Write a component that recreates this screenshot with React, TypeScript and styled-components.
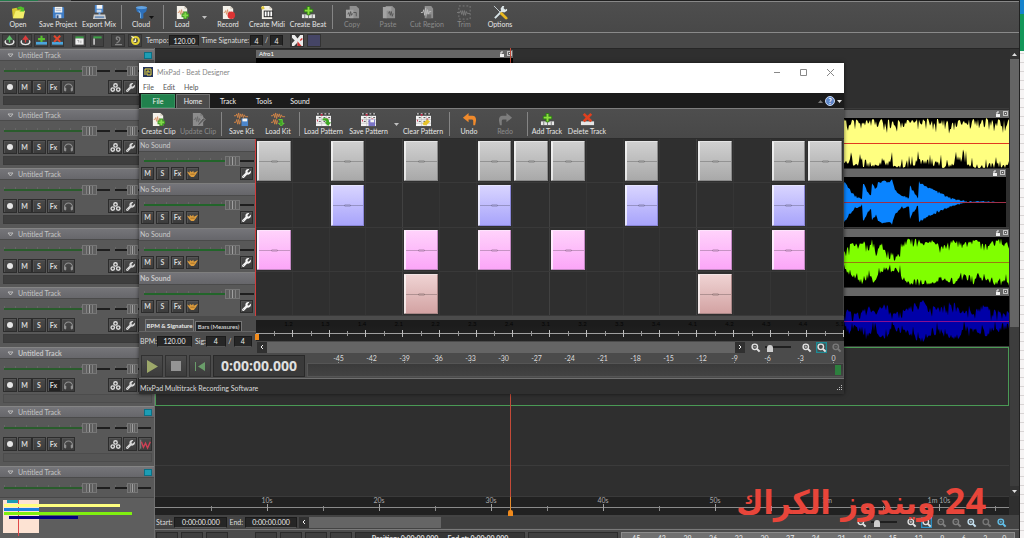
import React from 'react';
import styled, { createGlobalStyle, css } from 'styled-components';
import { FaWrench, FaHeadphones } from 'react-icons/fa6';

const ui = `Lato, "Noto Sans", sans-serif`;

const Global = createGlobalStyle`
  *, *::before, *::after { box-sizing: border-box; }
  body { margin: 0; background: #2f2f2f; font-family: ${ui}; font-size: 7px; line-height: 9px; color: #dcdcdc; }
  button, input { font: inherit; color: inherit; margin: 0; padding: 0; border: 0; background: none; }
  svg { display: block; flex: none; }
`;

/* ---------- icons ---------- */

const Svg = ({ size = 15, children }: { size?: number; children: React.ReactNode }) => (
  <svg width={size} height={size} viewBox="0 0 16 16" fill="none" aria-hidden="true">{children}</svg>
);

const FolderIcon = () => (
  <Svg>
    <path d="M2 14L1 4l5-1 1 2 6-1 1 2-1 8z" fill="#d8c832" />
    <path d="M2 14l3-8h10l-2 8z" fill="#f4ee6a" />
    <path d="M6 4c2-3 5-3 7-1l1-1v5H9l2-2c-1-1-3-1-5-1z" fill="#4fbf2a" />
  </Svg>
);
const FloppyIcon = () => (
  <Svg>
    <path d="M2 2h11l1 1v11H2z" fill="#3f7cc4" />
    <path d="M4 2h8v6H4z" fill="#f4f4f4" />
    <path d="M5 4h6M5 6h6" stroke="#a8b4c4" />
    <path d="M5 10h6v4H5z" fill="#d5dfec" />
    <path d="M6 11h2v3H6z" fill="#2b4f85" />
  </Svg>
);
const ExportIcon = () => (
  <Svg>
    <path d="M3 0h9v8H3z" fill="#4b86cc" />
    <path d="M5 0h6v4H5z" fill="#f5f5f5" />
    <path d="M5 5h5v3H5z" fill="#cad8e8" />
    <path d="M8 8v4" stroke="#5d9be0" strokeWidth="2" />
    <path d="M2 10h12l1 5H1z" fill="#cfcfcf" />
    <path d="M3 12h10v2H3z" fill="#6d8fb8" />
  </Svg>
);
const CloudIcon = () => (
  <Svg>
    <ellipse cx="8" cy="3" rx="6" ry="2" fill="#62a2e0" />
    <path d="M2 3c1 2 11 2 12 0l-1 4-3 2v5l-3 1V9L3 7z" fill="#2d6fb9" />
    <path d="M5 6l2 3v5" stroke="#7bb6ec" />
  </Svg>
);
type Badge = 'plus' | 'record' | 'keys' | 'pencil' | 'none';
const ClipIcon = ({ badge, dim }: { badge: Badge; dim?: boolean }) => (
  <Svg>
    <path d="M2 1h8l3 3v11H2z" fill={dim ? '#8c8c8c' : '#f4f1ea'} />
    <path d="M10 1v3h3" fill={dim ? '#777' : '#cfc8ba'} />
    {badge !== 'keys' && (
      <path d="M3 8h1l1-2 1 4 1-5 1 6 1-4 1 2h2" stroke={dim ? '#6a6a6a' : '#d9936a'} />
    )}
    {badge === 'plus' && (
      <>
        <path d="M11 7v8M7 11h8" stroke="#3b9420" strokeWidth="4" />
        <path d="M11 8v6M8 11h6" stroke="#84d84c" strokeWidth="2" />
      </>
    )}
    {badge === 'record' && <circle cx="11" cy="11" r="4" fill="#dd3434" />}
    {badge === 'keys' && (
      <>
        <path d="M4 6h10v7H4z" fill="#222" />
        <path d="M5 7h2v5H5zM8 7h2v5H8zM11 7h2v5h-2z" fill="#fff" />
        <path d="M1 2l3-1 1 3-3 1z" fill="#e0c83c" />
      </>
    )}
    {badge === 'pencil' && <path d="M7 13l6-7 2 2-6 6-2 0z" fill="#5c5c5c" stroke="#999" />}
  </Svg>
);
const AddBarIcon = () => (
  <Svg>
    <path d="M1 10h14v4H1z" fill="#e6e6e6" />
    <path d="M4 10v4M8 10v4M12 10v4" stroke="#777" />
    <path d="M8 1v10M3 6h10" stroke="#2f7d18" strokeWidth="4" />
    <path d="M8 2v8M4 6h8" stroke="#8ade3c" strokeWidth="2" />
  </Svg>
);
const DeleteBarIcon = () => (
  <Svg>
    <path d="M1 10h14v4H1z" fill="#e6e6e6" />
    <path d="M4 2l8 8M12 2l-8 8" stroke="#e0401f" strokeWidth="3" />
  </Svg>
);
const CopyIcon = ({ page }: { page?: boolean }) => (
  <Svg>
    <path d="M5 1h7l3 3v10H5z" fill="#8f8f8f" />
    <path d={page ? 'M2 2h9v4H6v8H2z' : 'M1 5h8v9H1z'} fill="#a3a3a3" />
    <path d={page ? 'M8 9l1-2 1 4 1-4 1 5 1-3' : 'M3 10l1-2 1 4 1-5 1 4 1-2M9 8h3v4'} stroke="#555" />
  </Svg>
);
const CutIcon = () => (
  <Svg>
    <path d="M5 1h7l2 3v10H5z" fill="#8f8f8f" />
    <path d="M1 8h2l1-3 1 6 1-8 1 9 1-7 1 5 1-3h2" stroke="#bdbdbd" />
    <path d="M7 10h5v4H7z" fill="#6c6c6c" />
  </Svg>
);
const TrimIcon = () => (
  <Svg>
    <path d="M2 1h12v14H2z" stroke="#7d7d7d" strokeDasharray="2 2" />
    <path d="M0 8h3l1-2 1 4 1-4 1 5 1-5 1 5 1-4 1 2h3" stroke="#7c7c7c" />
  </Svg>
);
const OptionsIcon = () => (
  <Svg>
    <path d="M2 14L12 4" stroke="#d8e4e8" strokeWidth="2" />
    <path d="M10 1l2 0-1 3 2 1 2-1v2l-3 2-3-1-1-3z" fill="#dfe8ea" />
    <path d="M1 1l8 8" stroke="#c9d2d6" />
    <path d="M9 9l5 5" stroke="#e8b820" strokeWidth="3" strokeLinecap="round" />
  </Svg>
);
const KitIcon = ({ load }: { load?: boolean }) => (
  <Svg>
    <path d="M0 4h2l1-2 1 4 1-5 1 6 1-5 1 3 1-3 1 4 1-3 1 2h3M0 11h2l1-3 1 5 1-5 1 5 1-4" stroke="#d08448" />
    {load ? (
      <path d="M8 8h4v4h2l-3 3-3-3h2" fill="#3fa324" stroke="#62cf3b" />
    ) : (
      <>
        <path d="M8 7h7v8H8z" fill="#4b86cc" />
        <path d="M9 7h5v3H9z" fill="#f4f4f4" />
      </>
    )}
  </Svg>
);
const PatternIcon = ({ badge }: { badge: 'load' | 'save' | 'clear' }) => (
  <Svg>
    <path d="M0 1h16v14H0z" fill="#f3f3f3" />
    <path d="M0 1h16v3H0z" fill="#3b3b3b" />
    <path d="M1 2h2M5 2h2M9 2h2M13 2h2" stroke="#fff" />
    <path d="M3 6h2M8 6h2M13 6h2M3 10h2M8 10h2" stroke="#444" />
    <path d="M5 3h2M1 9h1M11 8h2" stroke="#d02a4a" strokeWidth="2" />
    <path d="M0 8h16M0 12h16M6 4v11M11 4v11" stroke="#a9a9a9" strokeWidth=".5" />
    {badge === 'load' && <path d="M7 7c6-1 7 1 7 4h2l-3 4-4-4h2c0-2-1-2-4-2z" fill="#3da822" />}
    {badge === 'save' && (
      <>
        <path d="M8 8h7v7H8z" fill="#7a74c8" />
        <path d="M10 8h4v3h-4z" fill="#f2f2f2" />
      </>
    )}
    {badge === 'clear' && <path d="M7 12l5-4 3 2-4 4H8z" fill="#e6c32a" />}
  </Svg>
);
const ArrowBackIcon = ({ flip, color }: { flip?: boolean; color: string }) => (
  <Svg>
    <path
      transform={flip ? 'translate(16 0) scale(-1 1)' : undefined}
      d="M1 6l6-5v3h4c3 0 4 2 4 5l-1 5h-2l0-4c0-2-1-2-2-2H7v3z"
      fill={color}
    />
  </Svg>
);
const LoopIcon = ({ color }: { color: string }) => (
  <Svg size={11}>
    <path d="M3 8c-2 1-2 6 5 6s7-5 5-6" stroke="#e4e4e4" strokeWidth="2" />
    <path d="M8 11V5M5 6l3-4 3 4z" stroke={color} strokeWidth="2" fill={color} />
  </Svg>
);
const SmallTrackIcon = ({ remove }: { remove?: boolean }) => (
  <Svg size={11}>
    <path d="M0 10h16v4H0z" fill="#4aa5dc" />
    {remove ? (
      <path d="M3 1l9 9M12 1l-9 9" stroke="#e2452d" strokeWidth="3" />
    ) : (
      <path d="M8 1v9M3 6h10" stroke="#59c02f" strokeWidth="3" />
    )}
  </Svg>
);
const PanelIcon = ({ filled }: { filled?: boolean }) => (
  <Svg size={11}>
    <path d="M2 2h12v3H2z" fill="#3da047" />
    {filled ? <path d="M2 5h12v9H2z" fill="#f1f1f1" /> : <path d="M2 5h2v9H2z" fill="#e4e4e4" />}
    {filled && <path d="M5 8h2v3M10 8v4" stroke="#888" />}
  </Svg>
);
const MetronomeIcon = () => (
  <Svg size={11}><path d="M3 14h10M5 12c6-3 6-8 3-9s-5 2-1 4" stroke="#858585" strokeWidth="2" /></Svg>
);
const SnapIcon = () => (
  <Svg size={11}>
    <circle cx="8" cy="8" r="5" stroke="#e6d332" strokeWidth="3" />
    <path d="M8 5v4H5M2 2l4 2" stroke="#f7f3c8" strokeWidth="2" />
  </Svg>
);
const FadeIcon = () => (
  <Svg size={11}>
    <path d="M0 0h16v16H0z" fill="#ececec" />
    <path d="M4 0l4 5 4-5zM3 16l5-5v5zM0 4l4 4-4 4z" fill="#3a3a3a" />
    <path d="M8 9l6 7H8z" fill="#d43333" />
    <path d="M15 5l-3 3" stroke="#d43333" strokeWidth="2" />
  </Svg>
);
const CirclesIcon = () => (
  <Svg size={11}>
    <circle cx="8" cy="5" r="2.500" stroke="#dedede" strokeWidth="2" />
    <circle cx="4" cy="11" r="2.500" stroke="#dedede" strokeWidth="2" />
    <circle cx="12" cy="11" r="2.500" stroke="#dedede" strokeWidth="2" />
  </Svg>
);
const CurveIcon = () => (
  <Svg size={11}>
    <path d="M1 1v13" stroke="#a9a9a9" />
    <path d="M2 4l3 8 3-6 3 7 4-9" stroke="#cf4055" strokeWidth="2" />
  </Svg>
);
const HandIcon = () => (
  <Svg size={11}>
    <path d="M0 5l4 2 0-3 3 2 2-2 1 3 6-3-3 5-3 4H6L3 10z" fill="#dd9d3e" />
    <path d="M5 9h6" stroke="#8e5d1c" />
  </Svg>
);
const LensIcon = ({ sign, color = '#e2e2e2', box }: { sign?: '+' | '-'; color?: string; box?: string }) => (
  <Svg size={11}>
    {box && <path d="M1 1h14v14H1z" stroke={box} strokeWidth="2" />}
    <circle cx="7" cy="7" r="4" stroke={color} strokeWidth="2" />
    <path d="M10 10l4 4" stroke={color} strokeWidth="3" />
    {sign && <path d={sign === '-' ? 'M5 7h4' : 'M5 7h4M7 5v4'} stroke={color} />}
  </Svg>
);
const LockPair = () => (
  <svg width="14" height="6" viewBox="0 0 14 6" fill="none" aria-hidden="true">
    <path d="M1 3h4v3H1z" fill="#f0f0f0" />
    <path d="M2 3V1h2" stroke="#f0f0f0" />
    <path d="M8 0h5v5H8z" fill="#c4c4c4" />
    <path d="M9 1h3v3H9z" fill="#666" />
    <path d="M10 2h1v1h-1z" fill="#eee" />
  </svg>
);
const Caret = ({ up, color = '#e0e0e0' }: { up?: boolean; color?: string }) => (
  <svg width="5" height="3" viewBox="0 0 5 3" aria-hidden="true">
    <path d={up ? 'M0 3L2.500 0 5 3z' : 'M0 0h5L2.500 3z'} fill={color} />
  </svg>
);
const Chevron = ({ right }: { right?: boolean }) => (
  <svg width="4" height="6" viewBox="0 0 4 6" fill="none" aria-hidden="true">
    <path d={right ? 'M1 1l2 2-2 2' : 'M3 1L1 3l2 2'} stroke="#f4f4f4" />
  </svg>
);

/* ---------- shared parts ---------- */

const ToolRow = styled.div<{ $h: number }>`
  display: flex;
  height: ${p => p.$h}px;
  padding-top: 3px;
  background: linear-gradient(#4e4e4e, #484848);
  overflow: hidden;
`;
const Tool = styled.button<{ $w: number }>`
  position: relative;
  flex: none;
  width: ${p => p.$w}px;
  display: flex;
  flex-direction: column;
  align-items: center;
  white-space: nowrap;
  color: #e6e6e6;
  &:disabled { color: #8b8b8b; }
`;
const ToolLabel = styled.span`
  display: flex;
  justify-content: center;
  width: 0;
`;
const Divider = styled.span<{ $w: number }>`
  flex: none;
  width: ${p => p.$w}px;
  height: 24px;
  background: linear-gradient(#858585, #858585) center / 1px 100% no-repeat;
`;
const DropArrow = styled.button<{ $w: number }>`
  flex: none;
  width: ${p => p.$w}px;
  height: 24px;
  display: grid;
  place-items: center;
`;
const CornerCaret = styled.span`
  position: absolute;
  right: 4px;
  top: 11px;
`;

type ToolDef = { w: number; label?: string; icon?: React.ReactNode; off?: boolean; kind?: 'div' | 'drop'; caret?: boolean };
const Tools = ({ items, h }: { items: ToolDef[]; h: number }) => (
  <ToolRow $h={h}>
    {items.map((t, i) =>
      t.kind === 'div' ? (
        <Divider key={i} $w={t.w} />
      ) : t.kind === 'drop' ? (
        <DropArrow key={i} $w={t.w} aria-label="More"><Caret color="#c0c0c0" /></DropArrow>
      ) : (
        <Tool key={i} $w={t.w} disabled={t.off}>
          {t.icon}
          <ToolLabel>{t.label}</ToolLabel>
          {t.caret && <CornerCaret><Caret color="#111" /></CornerCaret>}
        </Tool>
      )
    )}
  </ToolRow>
);

const Field = styled.input<{ $w: number }>`
  width: ${p => p.$w}px;
  height: 11px;
  flex: none;
  text-align: center;
  background: #262626;
  border: 1px solid #1b1b1b;
  border-bottom-color: #555;
  color: #ececec;
`;

const Range = styled.input<{ $at: number; $thumb: number; $fill: string }>`
  appearance: none;
  flex: 1;
  min-width: 0;
  height: 10px;
  outline: none;
  background:
    linear-gradient(90deg, ${p => p.$fill} ${p => p.$at}%, #1f1f1f ${p => p.$at}%) center / 100% 2px no-repeat,
    repeating-linear-gradient(90deg, #666 0 1px, transparent 1px 11px) 0 2px / 74% 2px no-repeat;
  &::-webkit-slider-thumb {
    appearance: none;
    width: ${p => p.$thumb}px;
    height: 10px;
    border: 1px solid #767676;
    background: linear-gradient(90deg, transparent 25%, #828282 25% 33%, transparent 33% 45%, #a0a0a0 45% 55%, transparent 55% 67%, #828282 67% 75%, transparent 75%), #5f5f5f;
  }
`;
const ZoomRange = styled.input`
  appearance: none;
  width: 26px;
  height: 11px;
  flex: none;
  background: linear-gradient(#1f1f1f, #1f1f1f) center 4px / 100% 2px no-repeat;
  &::-webkit-slider-thumb {
    appearance: none;
    width: 6px;
    height: 7px;
    margin-top: 3px;
    background: #cfcfcf;
    border-radius: 3px 3px 0 0;
  }
`;
const SquareButton = styled.button<{ $size: number; $dark?: boolean }>`
  flex: none;
  width: ${p => p.$size}px;
  height: ${p => p.$size}px;
  display: grid;
  place-items: center;
  font-weight: 700;
  color: #d8d8d8;
  background: ${p => (p.$dark ? '#222' : 'linear-gradient(#4a4a4a, #3c3c3c)')};
  border: 1px solid #2c2c2c;
  box-shadow: inset 1px 1px 0 #535353;
`;
const Dot = styled.span`
  width: 6px;
  height: 6px;
  border-radius: 50%;
  background: #e6e6e6;
`;

/* ---------- main window ---------- */

const Page = styled.div`
  position: relative;
  display: flex;
  height: 100vh;
  overflow: hidden;
`;
const Desktop = styled.div`
  flex: none;
  width: 5px;
  border-left: 1px solid #222;
  background:
    linear-gradient(#1583cc 0 14px, #12985a 14px 51px, transparent 51px),
    repeating-linear-gradient(#f6f4f4 0 8px, #d9d5d5 8px 9px);
`;
const Main = styled.main`
  flex: 1;
  min-width: 0;
  display: flex;
  flex-direction: column;
  background: #4b4b4b;
`;
const TopEdge = styled.div`
  flex: none;
  height: 2px;
  border-bottom: 1px solid #888;
  background: linear-gradient(90deg, #237a4a 38px, #5a5a5a 38px 71px, #202020 71px);
`;
const QuickBar = styled.div`
  flex: none;
  display: flex;
  align-items: center;
  height: 16px;
  padding-left: 2px;
  border-top: 1px solid #8a8a8a;
  background: #484848;
  white-space: nowrap;
`;
const QuickButton = styled.button<{ $gap?: number; $fill?: string }>`
  flex: none;
  display: grid;
  place-items: center;
  width: 14px;
  height: 13px;
  margin-right: ${p => p.$gap ?? 2}px;
  background: ${p => p.$fill ?? '#424242'};
  border: 1px solid #333;
`;
const QuickLabel = styled.label`
  display: flex;
  align-items: center;
  gap: 1px;
  margin-left: 2px;
`;
const Slash = styled.span<{ $w: number }>`
  flex: none;
  width: ${p => p.$w}px;
  text-align: center;
`;
const Workspace = styled.div`
  position: relative;
  flex: 1;
  min-height: 0;
  display: flex;
  background: #2f2f2f;
`;
const Side = styled.aside`
  flex: none;
  width: 155px;
  display: flex;
  flex-direction: column;
  background: #5a5a5a;
  border-right: 1px solid #707070;
`;
const TrackList = styled.div`
  flex: 1;
  min-height: 0;
  overflow: hidden;
  padding-top: 1px;
`;
const Track = styled.section`
  height: 59px;
  background: #585858;
  &:nth-child(odd) { height: 60px; }
`;
const TrackHead = styled.header<{ $bold?: boolean }>`
  display: flex;
  align-items: center;
  height: 12px;
  padding: 0 2px 0 7px;
  gap: 4px;
  font-weight: ${p => (p.$bold ? 700 : 400)};
  color: #c4c4c4;
  background: linear-gradient(#757579, #67676b);
  border-top: 1px solid #858585;
  border-bottom: 1px solid #4a4a4a;
`;
const TrackName = styled.span`
  flex: 1;
`;
const TrackColor = styled.span`
  width: 8px;
  height: 7px;
  background: #1d9db4;
  border: 1px solid #0e6f84;
`;
const Sliders = styled.div`
  display: flex;
  align-items: center;
  gap: 5px;
  height: 19px;
  padding: 1px 3px 0 4px;
`;
const PanSlot = styled.span`
  display: flex;
  width: 36px;
`;
const Controls = styled.div`
  display: flex;
  justify-content: space-between;
  padding: 0 2px 0 3px;
`;
const LeftKeys = styled.div`
  display: flex;
  justify-content: space-between;
  width: 72px;
`;
const RightKeys = styled.div`
  display: flex;
  gap: 1px;
`;
const LevelBar = styled.div<{ $open?: boolean }>`
  height: 9px;
  margin: 2px 2px 0 3px;
  border: 1px solid ${p => (p.$open ? '#4c4c4c' : '#3a3a3a')};
  background: ${p => (p.$open ? '#555' : '#3e3e3e')};
`;
const Overview = styled.div`
  flex: none;
  display: grid;
  grid-template-rows: 4px 4px 4px 4px 4px 1fr;
  height: 41px;
  padding: 2px 4px 5px;
  border-top: 1px solid #474747;
  background:
    linear-gradient(#e04848, #e04848) 18px 2px / 1px 36px no-repeat,
    linear-gradient(#fde3d3, #fde3d3) 3px 2px / 36px 33px no-repeat,
    #5e5e5e;
`;
const OverviewBar = styled.span<{ $from: number; $w: number; $c: string }>`
  width: ${p => p.$w}px;
  height: 3px;
  margin-left: ${p => p.$from}px;
  background: ${p => p.$c};
`;

const TrackStrip = ({ index, folded }: { index: number; folded?: boolean }) => (
  <Track>
    <TrackHead $bold={index === 5}>
      <svg width="7" height="5" viewBox="0 0 7 5" fill="none" aria-hidden="true"><path d="M1 1h5L3.500 4z" stroke="#bdbdbd" /></svg>
      <TrackName>Untitled Track</TrackName>
      <TrackColor />
    </TrackHead>
    <Sliders>
      <Range type="range" aria-label="Volume" defaultValue={86} $at={80} $thumb={15} $fill="#2a5c2c" />
      <PanSlot><Range type="range" aria-label="Pan" defaultValue={48} $at={50} $thumb={11} $fill="#1c1c1c" /></PanSlot>
    </Sliders>
    {!folded && (
      <>
        <Controls>
          <LeftKeys>
            <SquareButton $size={14} aria-label="Record"><Dot /></SquareButton>
            <SquareButton $size={14}>M</SquareButton>
            <SquareButton $size={14}>S</SquareButton>
            <SquareButton $size={14} $dark={index === 5}>Fx</SquareButton>
            <SquareButton $size={14} aria-label="Monitor"><FaHeadphones size={9} color="#909090" /></SquareButton>
          </LeftKeys>
          <RightKeys>
            <SquareButton $size={14} aria-label="Group"><CirclesIcon /></SquareButton>
            <SquareButton $size={14} aria-label="Settings"><FaWrench size={9} /></SquareButton>
            <SquareButton $size={14} aria-label="Automation"><CurveIcon /></SquareButton>
          </RightKeys>
        </Controls>
        <LevelBar $open={index > 4} />
      </>
    )}
  </Track>
);

const Center = styled.div`
  flex: 1;
  min-width: 0;
  display: flex;
  flex-direction: column;
`;
const LaneArea = styled.div`
  flex: 1;
  min-height: 0;
  display: flex;
  border-top: 1px solid #262626;
`;
const Lanes = styled.div`
  flex: 1;
  min-width: 0;
  overflow: hidden;
  padding-right: 1px;
`;
const Lane = styled.div<{ $selected?: boolean }>`
  display: flex;
  flex-direction: column;
  height: 59px;
  padding-top: 1px;
  border-bottom: 1px solid #3b3b3b;
  &:nth-child(odd) { height: 60px; }
  ${p => p.$selected && css`border: 1px solid #4a9a55;`}
`;
const Region = styled.div<{ $from?: number; $end?: number; $w?: number }>`
  display: flex;
  flex-direction: column;
  width: ${p => (p.$w ? `${p.$w}px` : 'auto')};
  margin-left: ${p => p.$from ?? 0}px;
  margin-right: ${p => p.$end ?? 0}px;
  background: #000;
`;
const RegionHead = styled.div`
  display: flex;
  justify-content: space-between;
  align-items: center;
  height: 8px;
  padding: 0 0 0 3px;
  font-size: 6px;
  line-height: 8px;
  color: #fff;
  background: #666;
`;
const RegionBody = styled.div`
  display: flex;
  justify-content: flex-end;
  height: 50px;
`;

type Pt = [number, number];
const sample = (pts: Pt[], x: number) => {
  for (let i = 1; i < pts.length; i++) {
    if (x <= pts[i][0]) {
      const [x0, y0] = pts[i - 1];
      const [x1, y1] = pts[i];
      return y0 + ((y1 - y0) * (x - x0)) / (x1 - x0 || 1);
    }
  }
  return pts[pts.length - 1][1];
};
const wavePath = (top: Pt[], bottom: Pt[], jitter: number, seed: number) => {
  let s = seed;
  const rnd = () => {
    s = (s * 16807) % 2147483647;
    return s / 2147483647;
  };
  const up: string[] = [];
  const down: string[] = [];
  for (let x = 0; x <= 165; x++) {
    const a = Math.max(0, Math.min(25, sample(top, x) - rnd() * rnd() * jitter));
    const b = Math.max(0, Math.min(25, sample(bottom, x) - rnd() * rnd() * jitter));
    up.push(`${x} ${(25 - a).toFixed(1)}`);
    down.unshift(`${x} ${(25 + b).toFixed(1)}`);
  }
  return `M${up.join('L')}L${down.join('L')}Z`;
};
const Wave = ({ d, color, line }: { d: string; color: string; line: string }) => (
  <svg width="165" height="50" viewBox="0 0 165 50" aria-hidden="true">
    <path d={d} fill={color} />
    <path d="M0 25.500h165" stroke={line} />
  </svg>
);
const yellowWave = wavePath([[0, 24], [40, 24], [60, 23], [80, 25], [110, 23], [140, 25], [165, 24]], [[0, 22], [25, 25], [38, 22], [60, 26], [80, 21], [100, 26], [118, 20], [130, 26], [165, 26]], 16, 770);
const bluePts: Pt[] = [[0, 16], [3, 21], [8, 14], [14, 7], [21, 4], [22, 20], [27, 11], [30, 7], [31, 19], [35, 14], [37, 20], [42, 22], [48, 20], [51, 23], [54, 13], [60, 7], [68, 5], [69, 17], [72, 12], [77, 4], [78, 21], [85, 16], [92, 13], [99, 10], [105, 7], [112, 4], [120, 2], [130, 1], [144, 1], [165, 0]];
const blueWave = wavePath(bluePts, bluePts, 3, 12);
const greenWave = wavePath(
  [[0, 11], [6, 19], [12, 19], [18, 23], [25, 16], [28, 23], [33, 14], [37, 21], [42, 12], [50, 9], [56, 9], [57, 19], [64, 24], [75, 23], [90, 22], [97, 16], [110, 23], [120, 19], [130, 24], [140, 18], [150, 22], [158, 24], [165, 20]],
  [[0, 8], [6, 14], [12, 18], [18, 23], [25, 16], [30, 22], [34, 13], [42, 10], [56, 12], [58, 18], [66, 23], [75, 24], [90, 22], [100, 18], [110, 23], [120, 18], [130, 23], [140, 18], [150, 23], [165, 24]],
  12, 431
);
const navyPts: Pt[] = [[0, 5], [4, 16], [8, 8], [18, 12], [22, 19], [30, 10], [37, 18], [42, 18], [48, 8], [55, 13], [62, 12], [72, 19], [78, 22], [85, 16], [95, 14], [105, 19], [115, 18], [120, 9], [125, 16], [130, 11], [140, 17], [150, 12], [165, 10]];
const navyWave = wavePath(navyPts, navyPts, 15, 99);

const VScroll = styled.div`
  flex: none;
  width: 9px;
  display: flex;
  flex-direction: column;
  justify-content: space-between;
  background: #3d3d3d;
`;
const VButton = styled.button`
  display: grid;
  place-items: center;
  height: 10px;
  background: #333;
`;
const VThumb = styled.div`
  flex: 0 0 60%;
  margin-bottom: auto;
  background: #656565;
`;
const Ruler = styled.div`
  flex: none;
  display: flex;
  height: 19px;
  margin-right: 10px;
  padding-left: 56px;
  overflow: hidden;
  border-top: 1px solid #3a3a3a;
  background: linear-gradient(#8a8a8a, #8a8a8a) 0 10px / 100% 1px no-repeat, #212121;
`;
const RulerCell = styled.div`
  flex: none;
  width: 112px;
  height: 15px;
  line-height: 6px;
  text-align: center;
  color: #a8a8a8;
  background:
    linear-gradient(#a0a0a0, #a0a0a0) center 7px / 1px 7px no-repeat,
    linear-gradient(#8a8a8a, #8a8a8a) 0 9px / 1px 5px no-repeat;
`;
const Playhead = styled.div`
  position: absolute;
  left: 510px;
  top: 0;
  bottom: 22px;
  width: 1px;
  background: #c44a38;
`;
const PlayMark = styled.span`
  position: absolute;
  left: -2px;
  bottom: 0;
  width: 5px;
  height: 6px;
  background: #f08a1c;
  border-radius: 2px 2px 0 0;
`;
const PlayStem = styled.span`
  position: absolute;
  left: 0;
  bottom: 6px;
  width: 1px;
  height: 13px;
  background: #e58a2a;
`;
const RangeRow = styled.div`
  flex: none;
  display: flex;
  align-items: center;
  height: 15px;
  padding: 0 12px 0 1px;
  gap: 2px;
  white-space: nowrap;
  border-bottom: 1px solid #7a7a7a;
  background: #434343;
`;
const RowLabel = styled.label`
  display: flex;
  align-items: center;
  gap: 2px;
`;
const HScroll = styled.div`
  flex: 1;
  display: flex;
  height: 11px;
  background: #404040;
`;
const HButton = styled.button`
  width: 10px;
  display: grid;
  place-items: center;
  background: #303030;
`;
const HThumb = styled.div<{ $grow: number; $basis: number }>`
  flex: ${p => p.$grow} 0 ${p => p.$basis}px;
  background: #656565;
`;
const ZoomTools = styled.div`
  display: flex;
  gap: 4px;
  align-items: center;
  margin-left: 5px;
`;
const BareButton = styled.button`
  display: grid;
  place-items: center;
  width: 11px;
  height: 11px;
`;
const CutTransport = styled.div`
  flex: none;
  display: flex;
  gap: 3px;
  height: 8px;
  padding: 2px 4px 0 1px;
  background: #4b4b4b;
  overflow: hidden;
`;
const CutKey = styled.button<{ $w: number; $blank?: boolean }>`
  flex: none;
  width: ${p => p.$w}px;
  height: 22px;
  background: ${p => (p.$blank ? 'transparent' : '#3f3f3f')};
  border: ${p => (p.$blank ? '0' : '1px solid #2b2b2b')};
`;
const CutText = styled.div<{ $w: number }>`
  flex: none;
  width: ${p => p.$w}px;
  height: 20px;
  padding-top: 1px;
  text-align: center;
  font-weight: 700;
  color: #ddd;
  background: #363636;
  border: 1px solid #2b2b2b;
`;
const CutMeter = styled.div`
  flex: 1;
  display: flex;
  justify-content: space-around;
  height: 20px;
  padding-top: 1px;
  color: #eee;
  background: #707070;
  border: 1px solid #8c8c8c;
`;

/* ---------- beat designer ---------- */

const Designer = styled.section`
  position: absolute;
  left: 139px;
  right: 180px;
  top: 63px;
  background: #4b4b4b;
  box-shadow: 0 0 4px rgba(0, 0, 0, 0.6);
`;
const TitleBar = styled.header`
  display: flex;
  align-items: center;
  gap: 4px;
  height: 18px;
  padding-left: 4px;
  color: #858585;
  background: #fff;
`;
const WinKeys = styled.div`
  display: flex;
  margin-left: auto;
`;
const WinKey = styled.button`
  display: grid;
  place-items: center;
  width: 27px;
  height: 18px;
`;
const MenuBar = styled.nav`
  display: flex;
  gap: 9px;
  height: 12px;
  padding-left: 4px;
  color: #555;
  background: #fff;
`;
const MenuItem = styled.button`
  line-height: 11px;
`;
const TabBar = styled.div`
  display: flex;
  align-items: flex-end;
  height: 16px;
  padding-left: 2px;
  background: #1b1b1b;
  border-bottom: 1px solid #7d7d7d;
`;
const Tab = styled.button<{ $kind?: 'file' | 'active' }>`
  flex: none;
  width: ${p => (p.$kind ? 34 : 36)}px;
  height: 14px;
  color: #f0f0f0;
  ${p => p.$kind === 'file' && css`background: #21814d; border: 1px solid #3a8f61; margin-right: 1px;`}
  ${p => p.$kind === 'active' && css`background: #4b4b4b; border: 1px solid #707070; border-bottom: 0;`}
`;
const HelpGroup = styled.div`
  display: flex;
  align-items: center;
  gap: 2px;
  margin: 0 2px 2px auto;
`;
const HelpButton = styled.button`
  width: 10px;
  height: 10px;
  border-radius: 50%;
  background: #5f86c8;
  border: 1px solid #c7d6ef;
  color: #fff;
  font-weight: 700;
  line-height: 8px;
`;
const Board = styled.div`
  display: flex;
  border-top: 1px solid #2c2c2c;
`;
const BoardSide = styled.div`
  flex: none;
  width: 117px;
  background: #585858;
  border-right: 1px solid #d23c3c;
`;
const BeatTrack = styled.section`
  height: 44px;
  &:nth-child(2) { height: 45px; }
`;
const BeatHead = styled.header<{ $bold?: boolean }>`
  height: 13px;
  padding: 1px 1px 0;
  color: #cacaca;
  font-weight: ${p => (p.$bold ? 700 : 400)};
  background: linear-gradient(#75757a, #66666a);
  border-top: 1px solid #7e7e7e;
  border-bottom: 1px solid #4a4a4a;
`;
const BeatSlider = styled.div`
  display: flex;
  align-items: center;
  height: 15px;
  padding: 2px 1px 0 5px;
`;
const BeatKeys = styled.div`
  display: flex;
  gap: 2px;
  padding: 0 2px 0 2px;
  & > :last-child { margin-left: auto; }
`;
const Grid = styled.div`
  flex: 1;
  min-width: 0;
  background: #2f2f2f;
`;
const GridRow = styled.div`
  display: grid;
  grid-template-columns: repeat(16, 1fr);
  height: 44px;
  border-bottom: 1px solid #393939;
  &:nth-child(2) { height: 45px; }
`;
const Cell = styled.div<{ $line: boolean }>`
  padding: 2px 1px 1px 1px;
  border-right: 1px solid ${p => (p.$line ? '#414141' : '#353535')};
  display: flex;
`;
const Pad = styled.button<{ $a: string; $b: string; $edge: string }>`
  flex: 1;
  display: grid;
  place-items: center;
  border: 1px solid ${p => p.$edge};
  border-left: 2px solid #ffffffb0;
  border-top: 1px solid #ffffffb0;
  background: linear-gradient(#00000038, #00000038) center / 100% 1px no-repeat, linear-gradient(${p => p.$a}, ${p => p.$b});
`;
const PadMark = styled.span`
  width: 7px;
  height: 3px;
  border: 1px solid #00000024;
  border-radius: 2px;
`;
const LowerArea = styled.div`
  display: flex;
  padding-top: 4px;
`;
const LowerSide = styled.div`
  flex: none;
  width: 117px;
`;
const MiniTabs = styled.div`
  display: flex;
  gap: 1px;
  height: 12px;
  align-items: flex-end;
  padding-left: 6px;
  border-bottom: 1px solid #666;
`;
const MiniTab = styled.button<{ $on?: boolean }>`
  height: ${p => (p.$on ? 12 : 10)}px;
  width: ${p => (p.$on ? 49 : 47)}px;
  font-size: 6px;
  line-height: 8px;
  font-weight: ${p => (p.$on ? 700 : 400)};
  white-space: nowrap;
  color: #e8e8e8;
  background: ${p => (p.$on ? '#505050' : '#222')};
  border: 1px solid #777;
  border-bottom: 0;
`;
const BpmRow = styled.div`
  display: flex;
  align-items: center;
  height: 14px;
  margin-top: 2px;
  padding-left: 1px;
  & label { gap: 0; }
`;
const LowerMain = styled.div`
  flex: 1;
  min-width: 0;
`;
const BeatRuler = styled.div`
  position: relative;
  display: grid;
  grid-template-columns: repeat(16, 1fr);
  height: 21px;
  background: linear-gradient(#a0a0a0, #a0a0a0) 0 13px / 100% 1px no-repeat, linear-gradient(#1c1c1c 6px, #242424);
`;
const BeatTick = styled.span`
  line-height: 8px;
  font-size: 6px;
  color: #060606;
  text-align: right;
  background:
    linear-gradient(#bdbdbd, #bdbdbd) right 10px / 1px 7px no-repeat,
    linear-gradient(#9a9a9a, #9a9a9a) center 11px / 1px 5px no-repeat;
`;
const BeatMark = styled.span`
  position: absolute;
  left: -1px;
  top: 14px;
  width: 4px;
  height: 6px;
  background: #f08a1c;
`;
const BeatScroll = styled.div`
  display: flex;
  align-items: center;
  height: 12px;
  padding: 0 2px 0 1px;
`;
const Transport = styled.div`
  display: flex;
  gap: 2px;
  height: 26px;
  padding: 2px 0 1px 2px;
  border-bottom: 1px solid #707070;
`;
const TransportKey = styled.button`
  flex: none;
  width: 22px;
  height: 22px;
  display: grid;
  place-items: center;
  background: linear-gradient(#4c4c4c, #3c3c3c);
  border: 1px solid #313131;
`;
const Clock = styled.output`
  flex: none;
  width: 92px;
  height: 22px;
  text-align: center;
  font: 700 14px/20px "Open Sans", "Noto Sans", sans-serif;
  color: #e0e0e0;
  background: #3a3a3a;
  border: 1px solid #292929;
`;
const Meter = styled.div`
  flex: 1;
  min-width: 0;
`;
const MeterScale = styled.div`
  display: flex;
  justify-content: space-between;
  height: 8px;
  padding: 0 10px 0 31px;
  line-height: 6px;
`;
const MeterMark = styled.span`
  display: flex;
  justify-content: center;
  width: 1px;
  background: linear-gradient(#999, #999) center bottom / 1px 1px no-repeat;
`;
const MeterBar = styled.div`
  display: flex;
  justify-content: flex-end;
  height: 14px;
  padding: 1px 2px;
  background: linear-gradient(#3a3a3a, #434343);
  border: 1px solid #555;
`;
const Peak = styled.span`
  width: 6px;
  background: #2d7f3e;
`;
const Status = styled.footer`
  display: flex;
  align-items: center;
  justify-content: space-between;
  height: 15px;
  padding: 3px 1px 0;
  background: #2f2f2f;
`;
const Watermark = styled.div`
  position: absolute;
  right: 38px;
  bottom: 10px;
  font: 700 36px/50px "Open Sans", sans-serif;
  color: #e8453a;
  white-space: nowrap;
`;
const ArabicWords = styled.span`
  font: 700 33px/50px "DejaVu Sans Condensed", "DejaVu Sans", sans-serif;
  font-stretch: condensed;
`;

const mainTools: ToolDef[] = [
  { w: 36, label: 'Open', icon: <FolderIcon /> },
  { w: 44, label: 'Save Project', icon: <FloppyIcon /> },
  { w: 38, label: 'Export Mix', icon: <ExportIcon /> },
  { w: 6, kind: 'div' },
  { w: 34, label: 'Cloud', icon: <CloudIcon />, caret: true },
  { w: 10, kind: 'div' },
  { w: 28, label: 'Load', icon: <ClipIcon badge="plus" /> },
  { w: 16, kind: 'drop' },
  { w: 32, label: 'Record', icon: <ClipIcon badge="record" /> },
  { w: 46, label: 'Create Midi', icon: <ClipIcon badge="keys" /> },
  { w: 36, label: 'Create Beat', icon: <AddBarIcon /> },
  { w: 12, kind: 'div' },
  { w: 28, label: 'Copy', icon: <CopyIcon />, off: true },
  { w: 44, label: 'Paste', icon: <CopyIcon page />, off: true },
  { w: 34, label: 'Cut Region', icon: <CutIcon />, off: true },
  { w: 40, label: 'Trim', icon: <TrimIcon />, off: true },
  { w: 32, label: 'Options', icon: <OptionsIcon /> },
];
const beatTools: ToolDef[] = [
  { w: 39, label: 'Create Clip', icon: <ClipIcon badge="plus" /> },
  { w: 40, label: 'Update Clip', icon: <ClipIcon badge="pencil" dim />, off: true },
  { w: 6, kind: 'div' },
  { w: 35, label: 'Save Kit', icon: <KitIcon /> },
  { w: 38, label: 'Load Kit', icon: <KitIcon load /> },
  { w: 5, kind: 'div' },
  { w: 43, label: 'Load Pattern', icon: <PatternIcon badge="load" /> },
  { w: 47, label: 'Save Pattern', icon: <PatternIcon badge="save" /> },
  { w: 8, kind: 'drop' },
  { w: 46, label: 'Clear Pattern', icon: <PatternIcon badge="clear" /> },
  { w: 7, kind: 'div' },
  { w: 32, label: 'Undo', icon: <ArrowBackIcon color="#f08a2c" /> },
  { w: 40, label: 'Redo', icon: <ArrowBackIcon flip color="#7d7d7d" />, off: true },
  { w: 4, kind: 'div' },
  { w: 36, label: 'Add Track', icon: <AddBarIcon /> },
  { w: 44, label: 'Delete Track', icon: <DeleteBarIcon /> },
];
const padRows = [
  { on: [0, 2, 4, 6, 7, 8, 10, 12, 14, 15], a: '#d0d0d0', b: '#a9a9a9', edge: '#8a8a8a' },
  { on: [2, 6, 10, 14], a: '#d8d4ff', b: '#a8a4fb', edge: '#8a86d8' },
  { on: [0, 4, 6, 8, 12, 14], a: '#ffd2fb', b: '#fba6f8', edge: '#c488c4' },
  { on: [4, 12], a: '#efd3d3', b: '#d3a3a3', edge: '#a98686' },
];
const meterMarks = Array.from({ length: 16 }, (_, i) => i * 3 - 45);

const BeatDesigner = () => (
  <Designer>
    <TitleBar>
      <svg width="10" height="10" viewBox="0 0 10 10" fill="none" aria-hidden="true">
        <path d="M0 0h10v10H0z" fill="#26355c" />
        <path d="M2 8V2h6v6H4M4 8V4h2v2" stroke="#ecd83c" />
      </svg>
      MixPad - Beat Designer
      <WinKeys>
        <WinKey aria-label="Minimize"><svg width="6" height="6" aria-hidden="true"><path d="M0 3h6v1H0z" fill="#888" /></svg></WinKey>
        <WinKey aria-label="Maximize"><svg width="7" height="7" fill="none" aria-hidden="true"><path d="M.5.5h6v6h-6z" stroke="#888" /></svg></WinKey>
        <WinKey aria-label="Close"><svg width="7" height="7" aria-hidden="true"><path d="M0 0l7 7M7 0L0 7" stroke="#888" /></svg></WinKey>
      </WinKeys>
    </TitleBar>
    <MenuBar><MenuItem>File</MenuItem><MenuItem>Edit</MenuItem><MenuItem>Help</MenuItem></MenuBar>
    <TabBar>
      <Tab $kind="file">File</Tab>
      <Tab $kind="active">Home</Tab>
      <Tab>Track</Tab>
      <Tab>Tools</Tab>
      <Tab>Sound</Tab>
      <HelpGroup><Caret up color="#777" /><HelpButton>?</HelpButton><Caret /></HelpGroup>
    </TabBar>
    <Tools items={beatTools} h={29} />
    <Board>
      <BoardSide>
        {padRows.map((_, i) => (
          <BeatTrack key={i}>
            <BeatHead $bold={i === 3}>No Sound</BeatHead>
            <BeatSlider>
              <Range type="range" aria-label="Volume" defaultValue={85} $at={80} $thumb={15} $fill="#22652a" />
            </BeatSlider>
            <BeatKeys>
              <SquareButton $size={13}>M</SquareButton>
              <SquareButton $size={13}>S</SquareButton>
              <SquareButton $size={13}>Fx</SquareButton>
              <SquareButton $size={13} aria-label="Play"><HandIcon /></SquareButton>
              <SquareButton $size={13} aria-label="Settings"><FaWrench size={9} color="#f4f4f4" /></SquareButton>
            </BeatKeys>
          </BeatTrack>
        ))}
      </BoardSide>
      <Grid>
        {padRows.map((row, r) => (
          <GridRow key={r}>
            {Array.from({ length: 16 }, (_, c) => (
              <Cell key={c} $line={c % 4 === 3}>
                {row.on.includes(c) && (
                  <Pad $a={row.a} $b={row.b} $edge={row.edge} aria-label={`Beat ${c + 1}`}><PadMark /></Pad>
                )}
              </Cell>
            ))}
          </GridRow>
        ))}
      </Grid>
    </Board>
    <LowerArea>
      <LowerSide>
        <MiniTabs><MiniTab $on>BPM &amp; Signature</MiniTab><MiniTab>Bars (Measures)</MiniTab></MiniTabs>
        <BpmRow>
          <RowLabel>BPM:<Field $w={35} defaultValue="120.00" /></RowLabel>
          <Slash $w={3} />
          <RowLabel>Sig:<Field $w={20} defaultValue="4" /></RowLabel>
          <Slash $w={8}>/</Slash>
          <Field $w={18} aria-label="Beat unit" defaultValue="4" />
        </BpmRow>
      </LowerSide>
      <LowerMain>
        <BeatRuler>
          {Array.from({ length: 16 }, (_, i) => (
            <BeatTick key={i}>{`${Math.floor((i + 1) / 4) + 1}.${((i + 1) % 4) + 1}`}</BeatTick>
          ))}
          <BeatMark />
        </BeatRuler>
        <BeatScroll>
          <HScroll>
            <HButton aria-label="Scroll left"><Chevron /></HButton>
            <HThumb $grow={1} $basis={0} />
            <HButton aria-label="Scroll right"><Chevron right /></HButton>
          </HScroll>
          <ZoomTools>
            <BareButton aria-label="Zoom out"><LensIcon sign="-" /></BareButton>
            <ZoomRange type="range" aria-label="Zoom" defaultValue={10} />
            <Slash $w={2} />
            <BareButton aria-label="Zoom in"><LensIcon sign="+" /></BareButton>
            <BareButton aria-label="Zoom to fit"><LensIcon box="#1d8a94" /></BareButton>
            <BareButton aria-label="Zoom selection"><LensIcon sign="-" color="#7a7a7a" /></BareButton>
          </ZoomTools>
        </BeatScroll>
      </LowerMain>
    </LowerArea>
    <Transport>
      <TransportKey aria-label="Play"><svg width="11" height="13" aria-hidden="true"><path d="M0 0l11 6.500L0 13z" fill="#9da86a" /></svg></TransportKey>
      <TransportKey aria-label="Stop"><svg width="10" height="10" aria-hidden="true"><path d="M0 0h10v10H0z" fill="#949494" /></svg></TransportKey>
      <TransportKey aria-label="Rewind"><svg width="10" height="11" aria-hidden="true"><path d="M0 1h1v9H0zM10 1v9L3 5.500z" fill="#6a9d6a" /></svg></TransportKey>
      <Clock>0:00:00.000</Clock>
      <Meter>
        <MeterScale>{meterMarks.map(m => <MeterMark key={m}>{m}</MeterMark>)}</MeterScale>
        <MeterBar><Peak /></MeterBar>
      </Meter>
    </Transport>
    <Status>
      MixPad Multitrack Recording Software
      <svg width="7" height="7" aria-hidden="true"><path d="M5 0h1v1H5zM3 2h1v1H3zM5 2h1v1H5zM1 4h1v1H1zM3 4h1v1H3zM5 4h1v1H5z" fill="#bbb" /></svg>
    </Status>
  </Designer>
);

const waves = [
  { d: yellowWave, color: '#ffff80', line: '#e03a20', end: 0 },
  { d: blueWave, color: '#0a84ff', line: '#a03048', end: 3 },
  { d: greenWave, color: '#80ff00', line: '#9a7a10', end: 0 },
  { d: navyWave, color: '#0000a8', line: '#8a1090', end: 0 },
];

export default function App() {
  return (
    <Page>
      <Global />
      <Main>
        <TopEdge />
        <Tools items={mainTools} h={30} />
        <QuickBar>
          <QuickButton aria-label="Load clip"><LoopIcon color="#5cbf68" /></QuickButton>
          <QuickButton aria-label="Record clip"><LoopIcon color="#dd3c3c" /></QuickButton>
          <QuickButton aria-label="Add track"><SmallTrackIcon /></QuickButton>
          <QuickButton $gap={8} aria-label="Delete track"><SmallTrackIcon remove /></QuickButton>
          <QuickButton $gap={4} aria-label="Show panel"><PanelIcon filled /></QuickButton>
          <QuickButton $gap={7} aria-label="Show ruler"><PanelIcon /></QuickButton>
          <QuickButton $gap={3} aria-label="Metronome"><MetronomeIcon /></QuickButton>
          <QuickButton aria-label="Snap"><SnapIcon /></QuickButton>
          <QuickLabel>Tempo:<Field $w={30} defaultValue="120.00" /></QuickLabel>
          <QuickLabel>Time Signature:<Field $w={13} defaultValue="4" /></QuickLabel>
          <Slash $w={7}>/</Slash>
          <Field $w={13} aria-label="Beat unit" defaultValue="4" />
          <Slash $w={7} />
          <QuickButton $gap={3} aria-label="Crossfade"><FadeIcon /></QuickButton>
          <QuickButton $fill="#454566" aria-label="Color" />
        </QuickBar>
        <Workspace>
          <Side>
            <TrackList>{Array.from({ length: 8 }, (_, i) => <TrackStrip key={i} index={i} folded={i === 7} />)}</TrackList>
            <Overview>
              <OverviewBar $from={3} $w={11} $c="#1d9db4" />
              <OverviewBar $from={0} $w={116} $c="#ffff80" />
              <OverviewBar $from={0} $w={35} $c="#1a7fe0" />
              <OverviewBar $from={0} $w={128} $c="#80f010" />
              <OverviewBar $from={5} $w={69} $c="#000080" />
            </Overview>
          </Side>
          <Center>
            <LaneArea>
              <Lanes>
                <Lane>
                  <Region $from={101} $w={257}>
                    <RegionHead>Afro1<LockPair /></RegionHead>
                    <RegionBody />
                  </Region>
                </Lane>
                {waves.map(w => (
                  <Lane key={w.color}>
                    <Region $end={w.end}>
                      <RegionHead><span /><LockPair /></RegionHead>
                      <RegionBody><Wave d={w.d} color={w.color} line={w.line} /></RegionBody>
                    </Region>
                  </Lane>
                ))}
                <Lane $selected />
                <Lane />
                <Lane />
              </Lanes>
              <VScroll>
                <VButton aria-label="Scroll up"><Caret up /></VButton>
                <VThumb />
                <VButton aria-label="Scroll down"><Caret /></VButton>
              </VScroll>
            </LaneArea>
            <Ruler>{['10s', '20s', '30s', '40s', '50s', '1m', '1m 10s', ''].map((t, i) => <RulerCell key={i}>{t}</RulerCell>)}</Ruler>
            <RangeRow>
              <RowLabel>Start:<Field $w={53} defaultValue="0:00:00.000" /></RowLabel>
              <RowLabel>End:<Field $w={52} defaultValue="0:00:00.000" /></RowLabel>
              <HScroll><HButton aria-label="Scroll left"><Chevron /></HButton><HThumb $grow={0} $basis={132} /></HScroll>
              <ZoomTools>
                <BareButton aria-label="Zoom out"><LensIcon sign="-" /></BareButton>
                <ZoomRange type="range" aria-label="Zoom" defaultValue={15} />
                <Slash $w={1} />
                <BareButton aria-label="Zoom in"><LensIcon sign="+" /></BareButton>
                <BareButton aria-label="Zoom to fit"><LensIcon box="#2a8fc4" /></BareButton>
                <BareButton aria-label="Zoom selection"><LensIcon sign="-" color="#808080" /></BareButton>
                <BareButton aria-label="Zoom out tracks"><LensIcon sign="-" color="#808080" /></BareButton>
                <BareButton aria-label="Zoom in tracks"><LensIcon sign="+" color="#c4e0f0" /></BareButton>
                <BareButton aria-label="Zoom track"><LensIcon color="#777" /></BareButton>
                <BareButton aria-label="Zoom all"><LensIcon sign="+" color="#62c0ea" /></BareButton>
              </ZoomTools>
            </RangeRow>
            <CutTransport>
              {[22, 22, 22].map((w, i) => <CutKey key={i} $w={w} aria-label={`Transport ${i + 1}`} />)}
              <CutKey $w={21} $blank aria-label="Transport 4" />
              {[22, 22, 22, 22].map((w, i) => <CutKey key={i} $w={w} aria-label={`Transport ${i + 5}`} />)}
              <CutText $w={170}>Position: 0:00:00.000 — End at: 0:00:00.000</CutText>
              <CutKey $w={90} aria-label="Input" />
              <CutMeter>{meterMarks.map(m => <span key={m}>{m}</span>)}</CutMeter>
            </CutTransport>
          </Center>
          <Playhead><PlayStem /><PlayMark /></Playhead>
        </Workspace>
      </Main>
      <Desktop />
      <BeatDesigner />
      <Watermark dir="rtl" lang="ar">24 <ArabicWords>ويندوز الكراك</ArabicWords></Watermark>
    </Page>
  );
}
